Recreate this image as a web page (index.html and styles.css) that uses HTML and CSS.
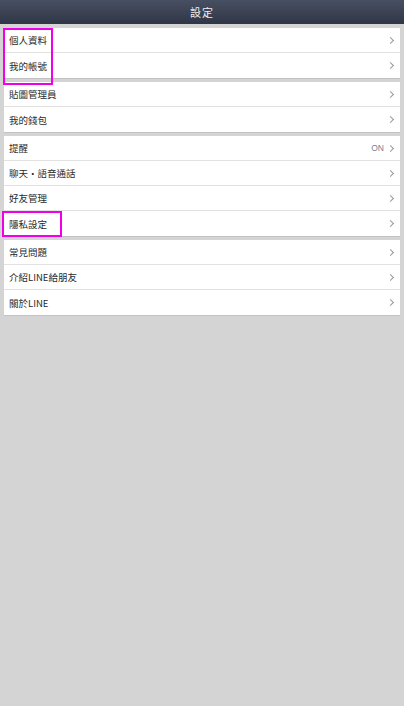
FILE: index.html
```html
<!DOCTYPE html>
<html lang="zh-Hant">
<head>
<meta charset="utf-8">
<title>設定</title>
<link rel="stylesheet" href="styles.css">
</head>
<body>
<header class="topbar">設定</header>
<main class="content">
  <section class="group">
    <div class="row"><span class="label">個人資料</span><span class="chev"></span></div>
    <div class="row"><span class="label">我的帳號</span><span class="chev"></span></div>
  </section>
  <section class="group">
    <div class="row"><span class="label">貼圖管理員</span><span class="chev"></span></div>
    <div class="row"><span class="label">我的錢包</span><span class="chev"></span></div>
  </section>
  <section class="group">
    <div class="row"><span class="label">提醒</span><span class="value">ON</span><span class="chev"></span></div>
    <div class="row"><span class="label">聊天・語音通話</span><span class="chev"></span></div>
    <div class="row"><span class="label">好友管理</span><span class="chev"></span></div>
    <div class="row"><span class="label">隱私設定</span><span class="chev"></span></div>
  </section>
  <section class="group">
    <div class="row"><span class="label">常見問題</span><span class="chev"></span></div>
    <div class="row"><span class="label">介紹LINE給朋友</span><span class="chev"></span></div>
    <div class="row"><span class="label">關於LINE</span><span class="chev"></span></div>
  </section>
</main>
<div class="mark mark-a"></div>
<div class="mark mark-b"></div>
</body>
</html>
```
FILE: styles.css
```css
html, body {
  margin: 0;
  padding: 0;
}
body {
  width: 404px;
  height: 706px;
  background: #d4d4d4;
  font-family: "Noto Sans CJK TC", "Noto Sans", sans-serif;
  position: relative;
  overflow: hidden;
}
.topbar {
  height: 24px;
  background: linear-gradient(#474f62, #2f3646);
  color: #eceef2;
  font-size: 11px;
  line-height: 24px;
  text-align: center;
  letter-spacing: 1px;
}
.content {
  padding: 4px 4px 0 4px;
  display: flex;
  flex-direction: column;
  gap: 4px;
}
.group {
  background: #fff;
  box-shadow: 0 1px 0 #c2c2c2;
  display: flex;
  flex-direction: column;
}
.row {
  height: 25px;
  box-sizing: border-box;
  display: flex;
  align-items: center;
  padding: 0 6px 0 5px;
  border-bottom: 1px solid #e2e2e2;
}
.row:last-child {
  border-bottom: none;
}
.label {
  flex: 1;
  font-size: 9.5px;
  color: #2a2a2a;
}
.value {
  font-family: "Liberation Sans", sans-serif;
  font-size: 8.5px;
  color: #7a8190;
  margin-right: 4px;
}
.chev {
  width: 4px;
  height: 4px;
  border-top: 1px solid #9a9a9a;
  border-right: 1px solid #9a9a9a;
  transform: rotate(45deg);
  margin-right: 1px;
}
.mark {
  position: absolute;
  border: 2px solid #f000e8;
  box-sizing: border-box;
}
.mark-a {
  left: 3px;
  top: 28px;
  width: 50px;
  height: 57px;
}
.mark-b {
  left: 2px;
  top: 211px;
  width: 60px;
  height: 26px;
}
```
